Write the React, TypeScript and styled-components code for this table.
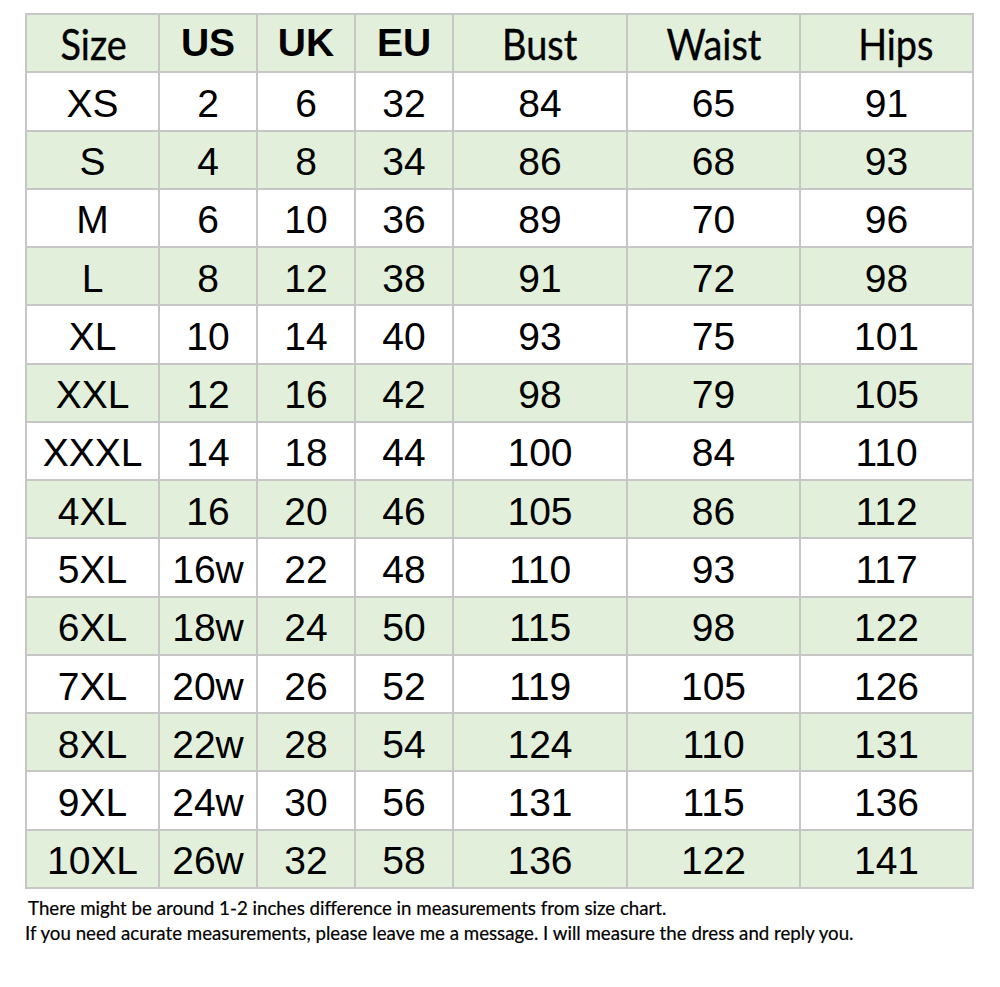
import React from "react";
import styled, { createGlobalStyle } from "styled-components";

const Global = createGlobalStyle`
  html, body {
    margin: 0;
    padding: 0;
    background: #ffffff;
  }
`;

const Page = styled.div`
  width: 1000px;
  height: 987px;
  padding: 13px 0 0 25px;
  box-sizing: border-box;
  background: #fff;
`;

const Grid = styled.div`
  display: grid;
  grid-template-columns: 131px 96px 96px 96px 172px 171px 171px;
  grid-template-rows: repeat(15, 1fr);
  gap: 2px;
  padding: 2px;
  width: 949px;
  height: 876px;
  box-sizing: border-box;
  background: #c6c6c6;
`;

const Cell = styled.div<{ $green: boolean; $head?: "bold" | "soft"; $shift?: number }>`
  display: flex;
  align-items: center;
  justify-content: center;
  padding-top: ${(p) => (p.$head ? "0" : "5px")};
  padding-left: ${(p) => p.$shift ?? 0}px;
  box-sizing: border-box;
  background: ${(p) => (p.$green ? "#e2efda" : "#ffffff")};
  color: #000;
  font-family: ${(p) =>
    p.$head === "soft" ? `"Lato", "Open Sans", sans-serif` : `"Liberation Sans", Arial, sans-serif`};
  font-size: ${(p) => (p.$head === "soft" ? "43px" : "39px")};
  font-weight: ${(p) => (p.$head === "bold" ? 700 : 400)};
  white-space: nowrap;
`;

// condensed look of the Myriad-like header words
const Narrow = styled.span`
  display: inline-block;
  transform: scaleX(0.88);
  -webkit-text-stroke: 0.4px #000;
`;

const Notes = styled.div`
  padding-top: 7px;
  font-family: "Lato", "Open Sans", sans-serif;
  font-size: 18.7px;
  line-height: 25px;
  color: #000;
  -webkit-text-stroke: 0.2px #000;
`;

const NoteLine = styled.div<{ $indent: number }>`
  padding-left: ${(p) => p.$indent}px;
`;

const header: { label: string; kind: "bold" | "soft"; shift?: number }[] = [
  { label: "Size", kind: "soft", shift: 2 },
  { label: "US", kind: "bold" },
  { label: "UK", kind: "bold" },
  { label: "EU", kind: "bold" },
  { label: "Bust", kind: "soft" },
  { label: "Waist", kind: "soft" },
  { label: "Hips", kind: "soft", shift: 18 },
];

const rows: string[][] = [
  ["XS", "2", "6", "32", "84", "65", "91"],
  ["S", "4", "8", "34", "86", "68", "93"],
  ["M", "6", "10", "36", "89", "70", "96"],
  ["L", "8", "12", "38", "91", "72", "98"],
  ["XL", "10", "14", "40", "93", "75", "101"],
  ["XXL", "12", "16", "42", "98", "79", "105"],
  ["XXXL", "14", "18", "44", "100", "84", "110"],
  ["4XL", "16", "20", "46", "105", "86", "112"],
  ["5XL", "16w", "22", "48", "110", "93", "117"],
  ["6XL", "18w", "24", "50", "115", "98", "122"],
  ["7XL", "20w", "26", "52", "119", "105", "126"],
  ["8XL", "22w", "28", "54", "124", "110", "131"],
  ["9XL", "24w", "30", "56", "131", "115", "136"],
  ["10XL", "26w", "32", "58", "136", "122", "141"],
];

export default function App() {
  return (
    <Page>
      <Global />
      <Grid>
        {header.map((h) => (
          <Cell key={h.label} $green $head={h.kind} $shift={h.shift}>
            {h.kind === "soft" ? <Narrow>{h.label}</Narrow> : h.label}
          </Cell>
        ))}
        {rows.map((row, r) =>
          row.map((v, c) => (
            <Cell key={`${r}-${c}`} $green={r % 2 === 1}>
              {v}
            </Cell>
          ))
        )}
      </Grid>
      <Notes>
        <NoteLine $indent={3}>There might be around 1-2 inches difference in measurements from size chart.</NoteLine>
        <NoteLine $indent={0}>
          If you need acurate measurements, please leave me a message. I will measure the dress and reply you.
        </NoteLine>
      </Notes>
    </Page>
  );
}
